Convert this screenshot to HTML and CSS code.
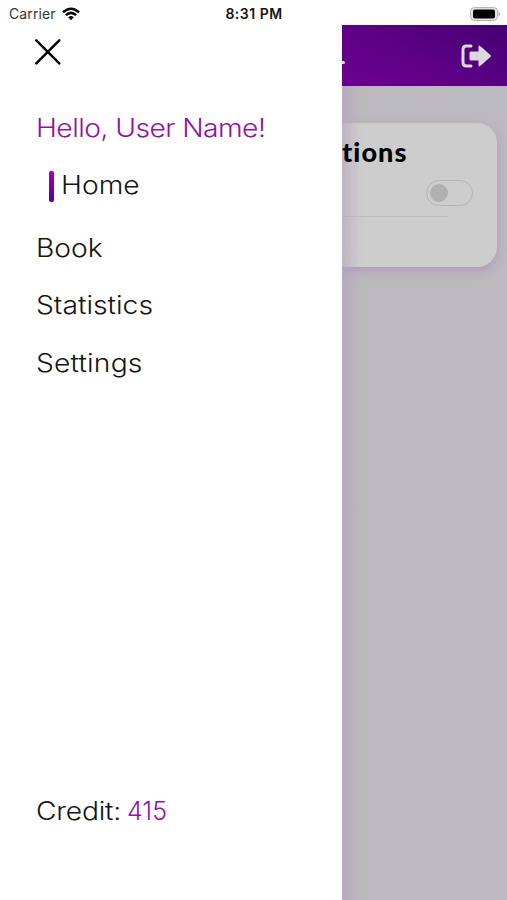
FILE: index.html
```html
<!DOCTYPE html>
<html lang="en">
<head>
<meta charset="utf-8">
<title>Menu</title>
<link rel="stylesheet" href="styles.css">
</head>
<body>
<div class="status">
  <div class="carrier"><span class="carrier-name">Carrier</span>
    <svg width="18" height="14" viewBox="0 0 18 14" fill="none" stroke="#000" stroke-width="2.5"><path d="M1 5.2Q9-1.8 17 5.2M3.9 8.1Q9 3.7 14.1 8.1"/><path d="M6.2 10.2Q9 8 11.8 10.2L9 13.2Z" fill="#000" stroke="none"/></svg>
  </div>
  <span class="time">8:31 PM</span>
  <svg class="battery" width="32" height="16" viewBox="0 0 32 16"><rect x="1.5" y="1.5" width="27" height="13" rx="4" fill="#e4e4e4" stroke="#b4b4b4"/><rect x="4" y="3.5" width="22" height="9" rx="2" fill="#000"/><path d="M29.5 5.5Q33 8 29.5 10.5Z" fill="#aaa"/></svg>
</div>
<div class="screen">
  <nav class="drawer">
    <svg class="close" width="28" height="28" viewBox="0 0 28 28" fill="none" stroke="#000" stroke-width="2.5" stroke-linecap="round"><path d="M2.3 2.3 25.3 25.3M25.3 2.3 2.3 25.3"/></svg>
    <div class="item hello"><span class="label">Hello, User Name!</span></div>
    <div class="item home"><span class="marker"></span><span class="label">Home</span></div>
    <div class="item book"><span class="label">Book</span></div>
    <div class="item stats"><span class="label">Statistics</span></div>
    <div class="item settings"><span class="label">Settings</span></div>
    <div class="item credit"><span class="label credit-name">Credit:</span><span class="amount">415</span></div>
  </nav>
  <main class="page">
    <header class="bar">
      <span class="dot"></span>
      <svg width="31" height="24" viewBox="0 0 31 24"><path d="M10 2H5.5Q2 2 2 5.5V18.5Q2 22 5.5 22H10" fill="none" stroke="#dcd8df" stroke-width="3" stroke-linecap="round"/><path d="M10 7.5H17.5V2.7Q17.5 .7 19.2 2L29.4 10.9Q30.6 12 29.4 13.1L19.2 22.1Q17.5 23.3 17.5 21.3V16.5H10Q8.5 16.5 8.5 15V9Q8.5 7.5 10 7.5Z" fill="#dcd8df"/></svg>
    </header>
    <section class="card">
      <h2>tions</h2>
      <div class="switch"><span class="knob"></span></div>
      <div class="rule"></div>
    </section>
    <div class="edge"></div>
  </main>
</div>
</body>
</html>
```
FILE: styles.css
```css
* { box-sizing: border-box; }
body { margin: 0; width: 507px; height: 900px; overflow: hidden; background: #fff; color: #151515; font-family: Inter, "Liberation Sans", sans-serif; }
svg { display: block; }
.status { height: 25px; display: grid; grid-template-columns: 1fr auto 1fr; align-items: center; padding: 2px 6px 0 7px; }
.carrier { display: flex; align-items: center; gap: 6px; padding-left: 2px; font-size: 14px; color: #333; }
.carrier-name { width: 47px; letter-spacing: 0.1px; }
.time { font-size: 14px; font-weight: 600; line-height: 18px; letter-spacing: 0.5px; }
.battery { justify-self: end; }
.screen { display: flex; height: 875px; }
.drawer { width: 342px; flex: none; display: flex; flex-direction: column; padding: 13px 0 72px 37px; background: #fff; font-weight: 350; }
.close { margin-left: -3px; }
.item { font-size: 25px; line-height: 34px; height: 34px; white-space: nowrap; }
.label { display: inline-block; transform: scaleX(1.13); transform-origin: left; margin-left: -1px; }
.hello { margin-top: 45px; color: #9210ac; letter-spacing: -0.5px; }
.home { margin-top: 23px; display: flex; align-items: center; gap: 8px; padding-left: 12px; }
.marker { width: 5px; height: 31px; margin-top: 3px; border-radius: 2px; background: linear-gradient(#a000b8, #5a0090); }
.book { margin-top: 29px; }
.stats { margin-top: 23px; }
.settings { margin-top: 24px; letter-spacing: 0.15px; }
.credit { margin-top: auto; display: flex; }
.credit-name { width: 91px; letter-spacing: -0.2px; }
.amount { color: #9210ac; letter-spacing: 0; }
.page { position: relative; flex: 1; overflow: hidden; background: #bbb8be; }
.bar { height: 61px; display: flex; align-items: center; justify-content: space-between; padding: 0 15px 0 0; background: linear-gradient(25deg, #6c0090, #5c0084 50%, #440072); }
.dot { width: 3px; height: 3px; margin-top: 14px; border-radius: 0 2px 2px 0; background: #dcd8df; }
.card { width: 155px; height: 144px; margin-top: 37px; padding-top: 12px; border-radius: 0 20px 20px 0; background: #cdcdcd; box-shadow: 0 4px 8px rgba(165, 115, 185, 0.4); }
.card h2 { position: relative; z-index: 1; margin: 0; font: 900 27px/34px Lato, sans-serif; letter-spacing: 1.1px; color: #000; }
.switch { width: 47px; height: 26px; margin: 11px 0 0 84px; padding: 3px; border: 1px solid #b3b3b3; border-radius: 13px; }
.knob { display: block; width: 18px; height: 18px; border-radius: 50%; background: #b0b0b0; }
.rule { width: 106px; height: 1px; margin-top: 10px; background: #bcbcbc; }
.edge { position: absolute; top: 61px; bottom: 0; left: 0; width: 20px; background: linear-gradient(90deg, rgba(178, 155, 186, 0.5), rgba(178, 155, 186, 0)); }
```
